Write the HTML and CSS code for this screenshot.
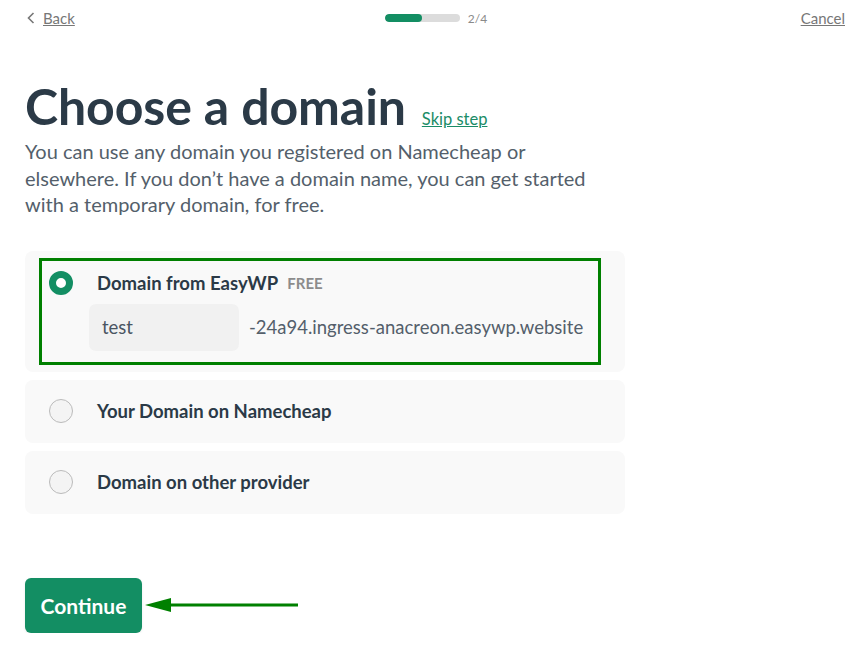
FILE: index.html
```html
<!DOCTYPE html>
<html lang="en">
<head>
    <meta charset="UTF-8">
    <meta name="viewport" content="width=device-width, initial-scale=1.0">
    <title>Choose a domain</title>
    <link rel="stylesheet" href="styles.css">
</head>
<body>

    <div class="topbar">
        <a class="back" href="#">
            <svg width="8" height="12" viewBox="0 0 8 12"><path d="M6.5 1 L1.5 6 L6.5 11" fill="none" stroke="#777" stroke-width="1.6"/></svg>
            <span>Back</span>
        </a>
        <div class="progress">
            <div class="track"><div class="fill" style="width: 50%"></div></div>
            <span class="step">2/4</span>
        </div>
        <a class="cancel" href="#">Cancel</a>
    </div>

    <div class="page">
        <div class="title-row">
            <h1>Choose a domain</h1>
            <a class="skip" href="#">Skip step</a>
        </div>
        <p class="intro">You can use any domain you registered on Namecheap or elsewhere. If you don’t have a domain name, you can get started with a temporary domain, for free.</p>

        <div class="options">
            <div class="card card-active">
                <div class="highlight">
                    <div class="option-row">
                        <span class="radio radio-on"></span>
                        <span class="label">Domain from EasyWP</span>
                        <span class="badge">FREE</span>
                    </div>
                    <div class="domain-row">
                        <div class="field">test</div>
                        <span class="suffix">-24a94.ingress-anacreon.easywp.website</span>
                    </div>
                </div>
            </div>
            <div class="card">
                <div class="option-row">
                    <span class="radio"></span>
                    <span class="label">Your Domain on Namecheap</span>
                </div>
            </div>
            <div class="card">
                <div class="option-row">
                    <span class="radio"></span>
                    <span class="label">Domain on other provider</span>
                </div>
            </div>
        </div>

        <div class="actions">
            <button class="btn">Continue</button>
            <!-- annotation arrow -->
            <svg class="arrow" width="160" height="20" viewBox="0 0 160 20">
                <path d="M26 10 H154" stroke="#008000" stroke-width="3"/>
                <path d="M1 10 L27 3 L27 17 Z" fill="#008000"/>
            </svg>
        </div>
    </div>

</body>
</html>
```

FILE: styles.css
```css
body {
    margin: 0;
    font-family: Lato, "Open Sans", sans-serif;
    color: #2b3a47;
    background: #fff;
}
a {
    color: inherit;
}
.topbar {
    display: grid;
    grid-template-columns: 1fr auto 1fr;
    align-items: center;
    height: 36px;
    padding: 0 14px 0 27px;
    font-size: 15px;
    color: #777;
}
.back {
    display: flex;
    align-items: center;
    gap: 8px;
    color: #777;
    justify-self: start;
}
.progress {
    display: flex;
    align-items: center;
    gap: 8px;
}
.track {
    width: 75px;
    height: 8px;
    border-radius: 4px;
    background: #dcdcdc;
    overflow: hidden;
}
.fill {
    height: 100%;
    border-radius: 4px;
    background: #138e63;
}
.step {
    font-size: 12px;
    color: #8a8a8a;
}
.cancel {
    color: #777;
    justify-self: end;
}
.page {
    padding: 0 25px;
    width: 600px;
}
.title-row {
    display: flex;
    align-items: baseline;
    gap: 16px;
    margin-top: 38px;
}
h1 {
    margin: 0;
    font-size: 50px;
    font-weight: 700;
    line-height: 64px;
    color: #2b3a47;
    letter-spacing: -0.1px;
}
.skip {
    font-size: 16.5px;
    color: #1a8c67;
}
.intro {
    margin: 0;
    width: 580px;
    font-size: 20px;
    line-height: 26.5px;
    color: #545f6b;
}
.options {
    display: flex;
    flex-direction: column;
    gap: 8px;
    margin-top: 33px;
}
.card {
    background: #f9f9f9;
    border-radius: 8px;
    padding: 19px 24px;
}
.card-active {
    padding: 7px 24px 7px 14px;
}
.highlight {
    border: 3px solid #008000;
    padding: 10px 7px 11px 7px;
}
.option-row {
    display: flex;
    align-items: center;
    height: 25px;
}
.radio {
    box-sizing: border-box;
    width: 24px;
    height: 24px;
    border-radius: 50%;
    border: 1px solid #bbb;
    background: #f4f4f4;
    margin-right: 24px;
    flex-shrink: 0;
}
.radio-on {
    border: 7px solid #138e63;
    background: #fff;
}
.label {
    font-size: 18.5px;
    font-weight: 700;
    color: #2b3a47;
}
.badge {
    margin-left: 9px;
    font-size: 15px;
    font-weight: 700;
    color: #8c8c8c;
}
.domain-row {
    display: flex;
    align-items: center;
    margin-top: 8px;
    margin-left: 40px;
}
.field {
    box-sizing: border-box;
    width: 150px;
    height: 47px;
    border-radius: 7px;
    background: #f1f1f1;
    padding: 0 13px;
    line-height: 47px;
    font-size: 18.5px;
    color: #4a5562;
}
.suffix {
    margin-left: 10px;
    font-size: 18.5px;
    color: #545f6b;
}
.actions {
    display: flex;
    align-items: center;
    gap: 2px;
    margin-top: 64px;
}
.btn {
    width: 117px;
    height: 55px;
    border: none;
    border-radius: 6px;
    background: #138e63;
    color: #fff;
    font-family: Lato, sans-serif;
    font-size: 21px;
    font-weight: 700;
    cursor: pointer;
    box-shadow: 0 1px 3px rgba(0, 0, 0, 0.08);
}
.arrow {
    display: block;
}
```
